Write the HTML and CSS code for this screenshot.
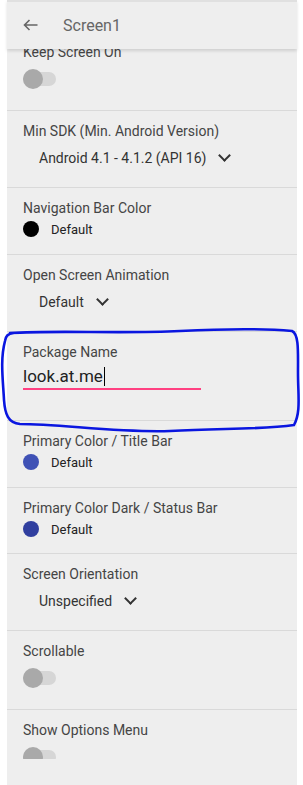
FILE: index.html
```html
<!DOCTYPE html>
<html>
<head>
    <title>Screen1 Properties</title>
    <link rel="stylesheet" href="styles.css">
</head>
<body>
    <div class="panel">
        <!-- app bar -->
        <div class="appbar">
            <svg class="back" width="15" height="12" viewBox="0 0 15 12">
                <path d="M14.5 6H1.5M6.5 1L1.5 6L6.5 11" fill="none" stroke="#666" stroke-width="1.6"/>
            </svg>
            <span class="title">Screen1</span>
        </div>

        <!-- property list -->
        <div class="scroller">
            <div class="props">
                <div class="prop prop-toggle">
                    <div class="label">Keep Screen On</div>
                    <div class="toggle"><span class="thumb"></span></div>
                </div>
                <div class="prop prop-select">
                    <div class="label">Min SDK (Min. Android Version)</div>
                    <div class="select">Android 4.1 - 4.1.2 (API 16)<span class="chev"></span></div>
                </div>
                <div class="prop prop-color">
                    <div class="label">Navigation Bar Color</div>
                    <div class="color"><span class="dot dot-black"></span>Default</div>
                </div>
                <div class="prop prop-select">
                    <div class="label">Open Screen Animation</div>
                    <div class="select">Default<span class="chev"></span></div>
                </div>
                <div class="prop prop-text">
                    <div class="label">Package Name</div>
                    <div class="text-input">look.at.me<span class="caret"></span></div>
                </div>
                <div class="prop prop-color">
                    <div class="label">Primary Color / Title Bar</div>
                    <div class="color"><span class="dot dot-primary"></span>Default</div>
                </div>
                <div class="prop prop-color prop-short">
                    <div class="label">Primary Color Dark / Status Bar</div>
                    <div class="color"><span class="dot dot-dark"></span>Default</div>
                </div>
                <div class="prop prop-select">
                    <div class="label">Screen Orientation</div>
                    <div class="select">Unspecified<span class="chev"></span></div>
                </div>
                <div class="prop prop-toggle">
                    <div class="label">Scrollable</div>
                    <div class="toggle"><span class="thumb"></span></div>
                </div>
                <div class="prop prop-toggle">
                    <div class="label">Show Options Menu</div>
                    <div class="toggle"><span class="thumb"></span></div>
                </div>
            </div>
        </div>
    </div>

    <!-- hand-drawn highlight -->
    <svg class="scribble" width="303" height="785" viewBox="0 0 303 785">
        <path d="M10 333 C60 330,120 334,180 331 S270 329,292 331 C299 334,298 352,298 372 C298 396,301 412,294 425 C260 430,220 428,170 431 C120 433,60 424,20 424 C8 423,5 414,4 400 C3 380,0 360,5 341 C6 336,7 334,14 333"
              fill="none" stroke="#0a16e0" stroke-width="2.6" stroke-linecap="round"/>
    </svg>
</body>
</html>
```
FILE: styles.css
```css
/* page */
body{
    margin: 0;
    background: #fff;
    font-family: Roboto, "Liberation Sans", sans-serif;
}
.panel{
    margin-left: 7px;
    width: 290px;
    height: 785px;
    background: #eeeeee;
    display: flex;
    flex-direction: column;
}

/* app bar */
.appbar{
    position: relative;
    z-index: 2;
    height: 47px;
    border-top: 2px solid #e0e0e0;
    background: #eeeeee;
    box-shadow: 0 2px 3px rgba(0,0,0,0.13);
    display: flex;
    align-items: center;
    flex-shrink: 0;
}
.back{
    margin-left: 16px;
    margin-top: -1px;
}
.title{
    margin-left: 25px;
    font-size: 16px;
    color: #666;
}

/* list */
.scroller{
    height: 710px;
    overflow: hidden;
    flex-shrink: 0;
}
.props{
    margin-top: -17px;
}
.prop{
    box-sizing: border-box;
    padding: 12px 16px 0;
    border-bottom: 1px solid #d9d9d9;
}
.prop-toggle{ height: 79px; }
.prop-select{ height: 77px; }
.prop-color{ height: 67px; }
.prop-short{ height: 66px; }
.prop-text{ height: 89px; }

.label{
    font-size: 14px;
    line-height: 16px;
    color: #454545;
}

/* toggle */
.toggle{
    position: relative;
    margin-top: 12px;
    width: 33px;
    height: 14px;
    border-radius: 7px;
    background: #d6d6d6;
}
.thumb{
    position: absolute;
    left: 0;
    top: -3px;
    width: 20px;
    height: 20px;
    border-radius: 50%;
    background: #a9a9a9;
}

/* dropdown */
.select{
    margin-top: 8px;
    padding-left: 16px;
    height: 22px;
    display: flex;
    align-items: center;
    font-size: 14px;
    color: #333;
}
.chev{
    width: 7px;
    height: 7px;
    margin-left: 14px;
    margin-top: -5px;
    border-right: 2px solid #333;
    border-bottom: 2px solid #333;
    transform: rotate(45deg);
}

/* colour */
.color{
    margin-top: 4px;
    height: 18px;
    display: flex;
    align-items: center;
    font-size: 13px;
    color: #222;
}
.dot{
    width: 16px;
    height: 16px;
    border-radius: 50%;
    margin-right: 12px;
}
.dot-black{ background: #000; }
.dot-primary{ background: #3f51b5; }
.dot-dark{ background: #303f9f; }

/* text field */
.text-input{
    width: 178px;
    margin-top: 6px;
    font-size: 17px;
    line-height: 20px;
    padding-bottom: 2px;
    border-bottom: 2px solid #ff4081;
    color: #222;
}
.caret{
    display: inline-block;
    width: 1px;
    height: 19px;
    margin-left: 1px;
    background: #000;
    vertical-align: -4px;
}

/* annotation */
.scribble{
    position: absolute;
    left: 0;
    top: 0;
    pointer-events: none;
}
```
